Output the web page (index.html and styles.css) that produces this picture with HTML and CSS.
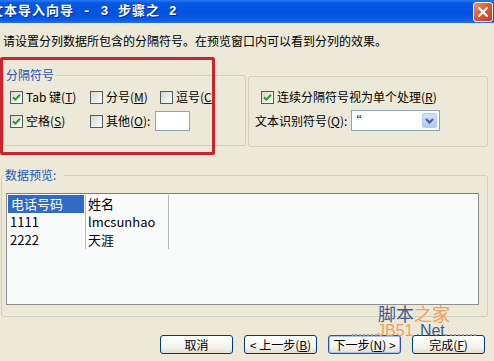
FILE: index.html
```html
<!DOCTYPE html>
<html lang="zh-CN">
<head>
    <meta charset="UTF-8">
    <meta name="viewport" content="width=device-width, initial-scale=1.0">
    <title>文本导入向导</title>
    <link rel="stylesheet" href="styles.css">
</head>
<body>

<div class="window">

    <div class="titlebar">
        <span class="title">文本导入向导 - 3 步骤之 2</span>
        <span class="close">
            <svg width="12" height="12" viewBox="0 0 12 12"><path d="M2 2 L10 10 M10 2 L2 10" stroke="#fff" stroke-width="2.2" stroke-linecap="round"/></svg>
        </span>
    </div>

    <p class="intro">请设置分列数据所包含的分隔符号。在预览窗口内可以看到分列的效果。</p>

    <div class="options">
        <div class="group delims">
            <span class="group-title">分隔符号</span>
            <div class="row row-a">
                <label class="check w80"><span class="box"><svg width="11" height="11" viewBox="0 0 11 11"><path d="M2 5.2 L4.3 7.6 L9 2.8" fill="none" stroke="#21a121" stroke-width="2"/></svg></span>Tab 键(<u>T</u>)</label>
                <label class="check w70"><span class="box"></span>分号(<u>M</u>)</label>
                <label class="check"><span class="box"></span>逗号(<u>C</u>)</label>
            </div>
            <div class="row row-b">
                <label class="check w80"><span class="box"><svg width="11" height="11" viewBox="0 0 11 11"><path d="M2 5.2 L4.3 7.6 L9 2.8" fill="none" stroke="#21a121" stroke-width="2"/></svg></span>空格(<u>S</u>)</label>
                <label class="check"><span class="box"></span>其他(<u>O</u>):</label>
                <span class="field"></span>
            </div>
        </div>

        <div class="group merge">
            <div class="row row-a">
                <label class="check indent"><span class="box"><svg width="11" height="11" viewBox="0 0 11 11"><path d="M2 5.2 L4.3 7.6 L9 2.8" fill="none" stroke="#21a121" stroke-width="2"/></svg></span>连续分隔符号视为单个处理(<u>R</u>)</label>
            </div>
            <div class="row row-c">
                <span>文本识别符号(<u>Q</u>):</span>
                <div class="combo">
                    <span class="quote">“</span>
                    <span class="combo-btn">
                        <svg width="9" height="6" viewBox="0 0 9 6"><path d="M1 1 L4.5 4.5 L8 1" fill="none" stroke="#4d6185" stroke-width="2"/></svg>
                    </span>
                </div>
            </div>
        </div>
    </div>

    <div class="group preview">
        <span class="group-title">数据预览:</span>
        <div class="list">
            <div class="col col-a">
                <div class="cell sel">电话号码</div>
                <div class="cell">1111</div>
                <div class="cell">2222</div>
            </div>
            <div class="col col-b">
                <div class="cell">姓名</div>
                <div class="cell">lmcsunhao</div>
                <div class="cell">天涯</div>
            </div>
        </div>
    </div>

    <div class="buttons">
        <button class="btn">取消</button>
        <button class="btn">&lt; 上一步(<u>B</u>)</button>
        <button class="btn default">下一步(<u>N</u>) &gt;</button>
        <button class="btn">完成(<u>F</u>)</button>
    </div>

    <!-- annotation drawn over the screenshot -->
    <div class="callout"></div>

    <div class="mark">
        <div class="mark-top"><span class="navy">脚本</span><span class="orange">之家</span></div>
        <div class="mark-bottom">
            <span class="dots dots-left"></span>
            <span class="orange">JB51</span><span class="navy net">.Net</span>
            <span class="dots"></span>
        </div>
    </div>

</div>

</body>
</html>
```

FILE: styles.css
```css
body {
  margin: 0;
  font-family: "Noto Sans CJK SC", sans-serif;
  font-size: 12px;
  color: #000;
}

.window {
  position: relative;
  width: 494px;
  height: 361px;
  overflow: hidden;
  background-color: #ece9d8;
}

.titlebar {
  height: 23px;
  display: flex;
  align-items: center;
  justify-content: space-between;
  background: linear-gradient(to bottom, #2a7af5 0, #0658e6 3px, #0252e0 60%, #0a5ae8 85%, #2a6ce6 100%);
}

.title {
  margin-left: -10px;
  color: #fff;
  font: bold 13px/15px "Liberation Mono", "Noto Sans CJK SC", monospace;
  letter-spacing: 1px;
  white-space: pre;
  text-shadow: 1px 1px #0a2a90;
}

.close {
  width: 20px;
  height: 20px;
  margin-right: 1px;
  box-sizing: border-box;
  border: 1px solid #fff;
  border-radius: 3px;
  background: linear-gradient(135deg, #ef9373, #db5634 50%, #c2411f);
  display: flex;
  align-items: center;
  justify-content: center;
}

.intro {
  margin: 11px 0 0 3px;
  line-height: 14px;
}

.options {
  display: flex;
  align-items: flex-start;
  gap: 2px;
  margin-top: 27px;
}

.group {
  border: 1px solid #d0d0bf;
  border-radius: 3px;
  display: flex;
  flex-direction: column;
  box-sizing: border-box;
}

.group-title {
  align-self: flex-start;
  margin: -8px 0 0 1px;
  padding: 0 1px;
  background-color: #ece9d8;
  color: #2456b8;
  line-height: 14px;
}

.delims {
  margin-left: 3px;
  width: 243px;
  padding-bottom: 14px;
}

.merge {
  width: 240px;
  margin-top: 1px;
  padding: 13px 0 15px 0;
}

.row {
  display: flex;
  align-items: center;
  padding-left: 6px;
  line-height: 14px;
  white-space: nowrap;
}

.row-a {
  height: 14px;
  margin-top: 8px;
}

.merge .row-a {
  margin-top: 0;
}

.row-b {
  height: 20px;
  margin-top: 7px;
}

.row-c {
  height: 21px;
  margin-top: 6px;
}

.check {
  display: flex;
  align-items: center;
}

.w80 { width: 80px; }
.w70 { width: 70px; }
.indent { margin-left: 6px; }

.box {
  width: 13px;
  height: 13px;
  box-sizing: border-box;
  border: 1px solid #4b5d66;
  background: linear-gradient(135deg, #d6d6cd, #f3f3ee 70%, #fff);
  margin-right: 3px;
  display: flex;
  align-items: center;
  justify-content: center;
}

.field {
  width: 35px;
  height: 20px;
  box-sizing: border-box;
  border: 1px solid #8fa3b8;
  background-color: #fff;
  margin-left: 5px;
}

.combo {
  width: 89px;
  height: 21px;
  box-sizing: border-box;
  margin-left: 4px;
  padding-left: 4px;
  border: 1px solid #8fa3b8;
  background-color: #fff;
  display: flex;
  align-items: center;
  justify-content: space-between;
}

.quote {
  align-self: flex-start;
  margin-top: 1px;
  font-family: "Liberation Serif", serif;
}

.combo-btn {
  width: 15px;
  height: 15px;
  margin-right: 2px;
  box-sizing: border-box;
  border: 1px solid #b8cdf6;
  border-radius: 2px;
  background: linear-gradient(#d6e2fb, #b2c7f4);
  display: flex;
  align-items: center;
  justify-content: center;
}

.preview {
  margin: 28px 0 0 1px;
  width: 487px;
  padding: 0 8px 11px 4px;
}

.preview .group-title {
  margin-left: -2px;
  padding-right: 8px;
}

.list {
  margin-top: 11px;
  height: 112px;
  box-sizing: border-box;
  border: 1px solid #8f9090;
  border-top-color: #7c7c7c;
  background-color: #f9fafa;
  padding: 1px 0 0 1px;
  display: flex;
  align-items: flex-start;
  font-size: 13px;
}

.col {
  box-sizing: border-box;
  border-right: 1px solid #b8b8b8;
}

.col-a { width: 78px; }
.col-b { width: 83px; }

.cell {
  height: 18px;
  line-height: 18px;
  padding-left: 2px;
  white-space: nowrap;
}

.cell.sel {
  background-color: #316ac5;
  color: #fff;
  margin-right: 1px;
  padding-left: 3px;
}

.buttons {
  display: flex;
  justify-content: flex-end;
  gap: 11px;
  margin-top: 18px;
  padding-right: 9px;
}

.btn {
  width: 73px;
  height: 19px;
  box-sizing: border-box;
  padding: 0;
  border: 1px solid #003c74;
  border-radius: 3px;
  background: linear-gradient(#ffffff, #f5f4ef 60%, #e2dfd4);
  font-family: "Noto Sans CJK SC", sans-serif;
  font-size: 12px;
  line-height: 17px;
  color: #000;
  text-align: center;
  white-space: nowrap;
}

.btn.default {
  border-color: #2c55a8;
  box-shadow: inset 0 0 0 1px #a9c4f2;
}

.callout {
  position: absolute;
  left: 0;
  top: 57px;
  width: 215px;
  height: 98px;
  box-sizing: border-box;
  border: 3px solid #c9252c;
  border-radius: 2px;
}

.mark {
  position: absolute;
  left: 352px;
  top: 304px;
  width: 124px;
  opacity: 0.9;
}

.mark-top {
  padding-left: 26px;
  font-size: 18px;
  line-height: 19px;
}

.mark-bottom {
  display: flex;
  align-items: flex-end;
  font-family: "Liberation Sans", sans-serif;
  font-size: 16px;
  line-height: 15px;
}

.net {
  margin-left: 2px;
}

.dots {
  flex: 1;
  border-bottom: 2px dotted #9a9a9a;
  margin-bottom: 2px;
}

.dots-left {
  flex: 0 0 25px;
}

.navy { color: #2e4c8e; }
.orange { color: #f09a4a; }
```
